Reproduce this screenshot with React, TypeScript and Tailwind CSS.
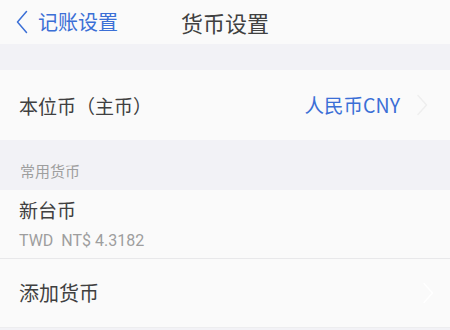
import React from "react";

const Chevron = ({ cls }: { cls: string }) => (
  <svg width="12" height="22" viewBox="0 0 12 22" className={cls} fill="none">
    <path d="M2 1.5 L10.5 11 L2 20.5" stroke="currentColor" strokeWidth="1.4" strokeLinecap="round" strokeLinejoin="round" />
  </svg>
);

export default function App() {
  return (
    <div
      className="w-[450px] h-[330px] overflow-hidden bg-[#f2f2f6] text-[#404040]"
      style={{ fontFamily: '"Noto Sans CJK SC", "Noto Sans", sans-serif' }}
    >
      <div className="h-[44px] bg-[#fafafa] relative flex items-center">
        <div className="flex items-center pl-[16px] text-[#3b6fd6]">
          <svg width="12" height="24" viewBox="0 0 12 24" fill="none" className="mr-[10px]">
            <path d="M10.5 1.5 L1.5 12 L10.5 22.5" stroke="currentColor" strokeWidth="1.5" strokeLinecap="round" strokeLinejoin="round" />
          </svg>
          <span className="text-[20px] leading-none">记账设置</span>
        </div>
        <div className="absolute left-0 right-0 top-0 h-[44px] flex items-center justify-center pointer-events-none">
          <span className="text-[22px] leading-none text-[#404040]">货币设置</span>
        </div>
      </div>
      <div className="h-[26px]" />
      <div className="h-[70px] bg-[#fafafa] flex items-center pl-[19px] pr-[22px]">
        <span className="text-[19px] leading-none flex-1">本位币（主币）</span>
        <span className="text-[19.5px] leading-none text-[#3b6fd6] mr-[16px]">人民币CNY</span>
        <Chevron cls="text-[#eeeeee]" />
      </div>
      <div className="h-[50px] flex items-center pl-[20px] pt-[10px]">
        <span className="text-[15px] leading-none text-[#9e9e9e]">常用货币</span>
      </div>
      <div className="h-[69px] bg-[#fafafa] flex flex-col justify-center pl-[19px] border-b border-[#e8e8ea]">
        <span className="text-[19px] leading-none">新台币</span>
        <span className="text-[16px] leading-none text-[#9e9e9e] mt-[14px]" style={{ fontFamily: '"Roboto", "Noto Sans CJK SC", sans-serif' }}>TWD&nbsp;&nbsp;NT$ 4.3182</span>
      </div>
      <div className="h-[69px] bg-[#fafafa] flex items-center pl-[19px] pr-[16px] border-b border-[#ededef]">
        <span className="text-[20px] leading-none flex-1">添加货币</span>
        <Chevron cls="text-[#ffffff]" />
      </div>
    </div>
  );
}
